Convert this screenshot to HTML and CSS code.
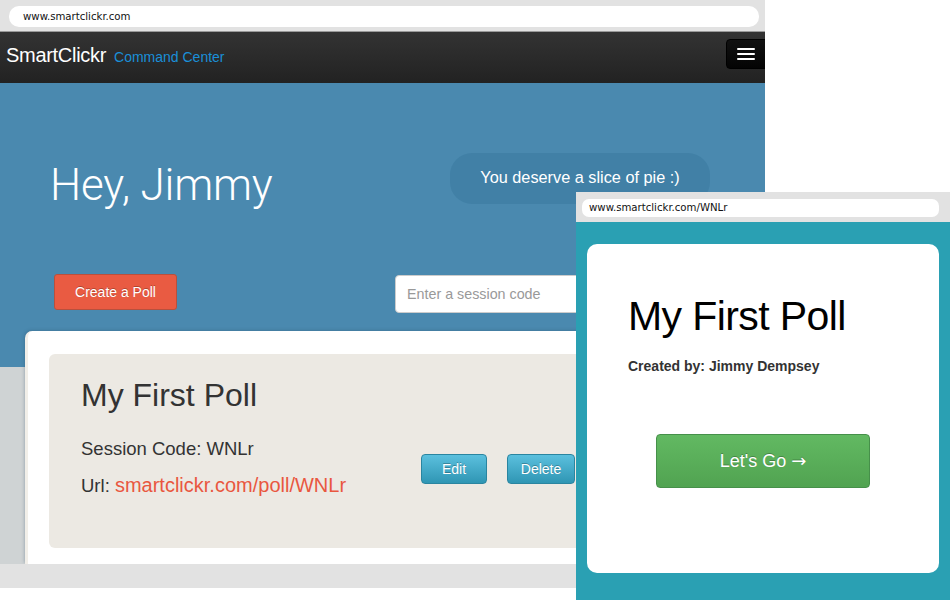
FILE: index.html
```html
<!DOCTYPE html>
<html lang="en">
<head>
<meta charset="utf-8">
<title>SmartClickr</title>
<link rel="stylesheet" href="styles.css">
</head>
<body>
<div class="stage">
  <div class="win win-main">
    <div class="chrome chrome-main">
      <div class="url url-main">www.smartclickr.com</div>
    </div>
    <nav class="nav">
      <div class="brand"><span class="brand-name">SmartClickr</span><span class="brand-sub">Command Center</span></div>
      <button class="burger" type="button" aria-label="Menu"><span></span><span></span><span></span></button>
    </nav>
    <section class="hero">
      <div class="hero-row">
        <h1 class="greet">Hey, Jimmy</h1>
        <div class="pie">You deserve a slice of pie :)</div>
      </div>
      <div class="hero-row hero-row2">
        <button class="btn btn-create" type="button">Create a Poll</button>
        <input class="session" type="text" placeholder="Enter a session code">
      </div>
    </section>
    <section class="board">
      <div class="card">
        <div class="poll">
          <h2 class="poll-title">My First Poll</h2>
          <div class="poll-row">
            <div class="poll-info">
              <div class="line">Session Code: WNLr</div>
              <div class="line">Url: <a class="link" href="#">smartclickr.com/poll/WNLr</a></div>
            </div>
            <div class="actions">
              <button class="btn btn-info btn-edit" type="button">Edit</button>
              <button class="btn btn-info btn-del" type="button">Delete</button>
            </div>
          </div>
        </div>
      </div>
    </section>
    <div class="foot"></div>
  </div>

  <div class="win win-mobile">
    <div class="chrome chrome-mobile">
      <div class="url url-mobile">www.smartclickr.com/WNLr</div>
    </div>
    <div class="mobile-body">
      <div class="m-card">
        <h2 class="m-title">My First Poll</h2>
        <div class="m-by">Created by: Jimmy Dempsey</div>
        <button class="btn btn-go" type="button">Let's Go <span class="arrow">→</span></button>
      </div>
    </div>
  </div>
</div>
</body>
</html>
```

FILE: styles.css
```css
* { box-sizing: border-box; }
html, body { margin: 0; padding: 0; background: #ffffff; }
body { font-family: "Liberation Sans", Arial, sans-serif; }

.stage {
  position: relative;
  width: 950px;
  height: 600px;
  overflow: hidden;
  background: #ffffff;
}

.win { position: absolute; overflow: hidden; }

.win-main {
  left: 0;
  top: 0;
  width: 765px;
  height: 588px;
  display: flex;
  flex-direction: column;
  background: #ffffff;
}

/* browser chrome */
.chrome { background: #e2e2e2; }
.chrome-main {
  height: 32px;
  padding: 6px 6px 0 9px;
  border-bottom: 1px solid #9a9a9a;
}
.url {
  background: #ffffff;
  border-radius: 10px;
  font-family: "DejaVu Sans", Verdana, sans-serif;
  font-stretch: condensed;
  color: #111;
  white-space: nowrap;
}
.url-main {
  height: 21px;
  line-height: 21px;
  padding-left: 14px;
  font-size: 11.3px;
}

/* navbar */
.nav {
  height: 51px;
  background: linear-gradient(#333333, #222222);
  display: flex;
  justify-content: space-between;
  align-items: flex-start;
  padding-left: 6px;
}
.brand { margin-top: 11px; line-height: 24px; white-space: nowrap; }
.brand-name { color: #ffffff; font-size: 20px; letter-spacing: -0.3px; }
.brand-sub { color: #1a8fd8; font-size: 14px; margin-left: 8px; }
.burger {
  margin-top: 7px;
  margin-right: -6px;
  width: 45px;
  height: 30px;
  border: 1px solid #000;
  border-radius: 4px;
  background: linear-gradient(#111, #040404);
  padding: 0 0 0 10px;
  display: flex;
  flex-direction: column;
  justify-content: center;
  gap: 3px;
}
.burger span { display: block; width: 18px; height: 2px; background: #ffffff; border-radius: 1px; }

/* hero */
.hero {
  height: 248px;
  background: #4a89af;
  padding: 70px 0 0 50px;
}
.hero-row { display: flex; align-items: flex-start; }
.greet {
  margin: 7px 0 0 0;
  width: 400px;
  font-family: Roboto, "Liberation Sans", sans-serif;
  font-weight: 300;
  font-size: 44px;
  line-height: 51px;
  letter-spacing: -0.2px;
  color: #ffffff;
}
.pie {
  width: 260px;
  height: 51px;
  border-radius: 22px;
  background: #4180a6;
  color: #ffffff;
  font-size: 16.3px;
  line-height: 49px;
  text-align: center;
}
.hero-row2 { margin-top: 63px; }

.btn {
  font-family: "Liberation Sans", Arial, sans-serif;
  color: #ffffff;
  cursor: pointer;
  text-shadow: 0 -1px 0 rgba(0,0,0,0.25);
}
.btn-create {
  margin-left: 4px;
  width: 123px;
  height: 36px;
  font-size: 14px;
  background: #e95b42;
  border: 1px solid #b8503d;
  border-radius: 3px;
}
.session {
  margin-left: 218px;
  margin-top: 1px;
  width: 330px;
  height: 38px;
  border: 1px solid #cccccc;
  border-radius: 4px;
  padding: 0 11px;
  font-family: "Liberation Sans", Arial, sans-serif;
  font-size: 14.3px;
  background: #ffffff;
}
.session::placeholder { color: #999999; }

/* board */
.board {
  height: 233px;
  background: linear-gradient(#4a89af 0 36px, #cfd3d4 36px);
  padding-left: 25px;
}
.card {
  width: 760px;
  height: 233px;
  background: #ffffff;
  border-left: 3px solid #f1eee8;
  border-radius: 7px 0 0 0;
  box-shadow: -1px -1px 3px rgba(40, 70, 100, 0.25);
  padding: 23px 0 16px 21px;
}
.poll {
  height: 194px;
  background: #ece9e3;
  border-radius: 6px;
  padding: 23px 0 0 32px;
}
.poll-title {
  margin: 0;
  font-weight: normal;
  font-size: 32px;
  line-height: 36px;
  color: #333333;
}
.poll-row { display: flex; align-items: center; margin-top: 18px; }
.poll-info { width: 340px; }
.line { font-size: 18.5px; line-height: 36px; color: #333333; white-space: nowrap; }
.link { color: #e9573f; text-decoration: none; font-size: 20px; }
.actions { display: flex; gap: 20px; margin-top: 3px; }
.btn-info {
  height: 30px;
  font-size: 14px;
  background: linear-gradient(#5bc0de, #2f96b4);
  border: 1px solid #2a85a0;
  border-radius: 4px;
}
.btn-edit { width: 66px; }
.btn-del { width: 68px; }

.foot {
  height: 24px;
  width: 576px;
  background: #e2e2e2;
}

/* mobile window */
.win-mobile {
  left: 576px;
  top: 192px;
  width: 374px;
  height: 408px;
  display: flex;
  flex-direction: column;
}
.chrome-mobile {
  height: 30px;
  padding: 7px 11px 0 6px;
}
.url-mobile {
  height: 18px;
  line-height: 18px;
  padding-left: 7px;
  border-radius: 7px;
  font-size: 11.3px;
}
.mobile-body {
  flex: 1;
  background: #2aa0b3;
  padding: 22px 11px 0 11px;
}
.m-card {
  height: 329px;
  background: #ffffff;
  border-radius: 10px;
  padding: 48px 0 0 41px;
}
.m-title {
  margin: 0;
  font-weight: normal;
  font-size: 41px;
  line-height: 48px;
  letter-spacing: -0.6px;
  color: #000000;
}
.m-by {
  margin-top: 16px;
  font-size: 14px;
  line-height: 20px;
  font-weight: bold;
  color: #333333;
}
.btn-go {
  margin: 58px 0 0 28px;
  width: 214px;
  height: 54px;
  font-size: 18px;
  background: linear-gradient(#62b962, #51a351);
  border: 1px solid #46904a;
  border-radius: 4px;
}
.arrow { font-family: "DejaVu Sans", sans-serif; font-size: 18px; }
```
